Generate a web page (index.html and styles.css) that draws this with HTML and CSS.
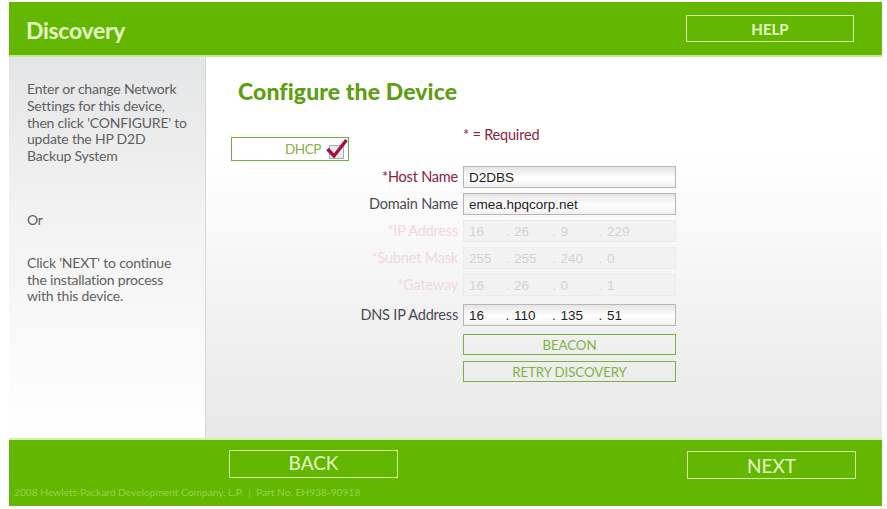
FILE: index.html
```html
<!DOCTYPE html>
<html lang="en">
<head>
<meta charset="utf-8">
<title>Discovery</title>
<link rel="stylesheet" href="styles.css">
</head>
<body>
<div class="app">
  <header class="top">
    <h1 class="brand">Discovery</h1>
    <a class="nav-btn help">HELP</a>
  </header>
  <div class="middle">
    <aside class="side">
      <p class="side-a">Enter or change Network<br>Settings for this device,<br>then click 'CONFIGURE' to<br>update the HP D2D<br>Backup System</p>
      <p class="side-b">Or</p>
      <p class="side-c">Click 'NEXT' to continue<br>the installation process<br>with this device.</p>
    </aside>
    <main class="main">
      <h2 class="title">Configure the Device</h2>
      <div class="dhcp-row">
        <div class="dhcp">
          <span>DHCP</span>
          <svg class="check" width="22" height="22" viewBox="0 0 22 22" aria-hidden="true">
            <rect x="3.5" y="7.5" width="14" height="13" fill="#e9ebee" stroke="#a9adb3" stroke-width="1"/>
            <path d="M1.5 11 L8 18 L20.5 2" fill="none" stroke="#a6123c" stroke-width="3.4"/>
          </svg>
        </div>
        <p class="required">* = Required</p>
      </div>
      <div class="form">
        <label class="lab req">*Host Name</label><div class="field">D2DBS</div>
        <label class="lab">Domain Name</label><div class="field">emea.hpqcorp.net</div>
        <label class="lab req off">*IP Address</label><div class="field ip off"><span>16</span><span>. 26</span><span>. 9</span><span>. 229</span></div>
        <label class="lab req off">*Subnet Mask</label><div class="field ip off"><span>255</span><span>. 255</span><span>. 240</span><span>. 0</span></div>
        <label class="lab req off">*Gateway</label><div class="field ip off"><span>16</span><span>. 26</span><span>. 0</span><span>. 1</span></div>
        <label class="lab dns">DNS IP Address</label><div class="field ip dns"><span>16</span><span>. 110</span><span>. 135</span><span>. 51</span></div>
        <a class="act">BEACON</a>
        <a class="act">RETRY DISCOVERY</a>
      </div>
    </main>
  </div>
  <footer class="bottom">
    <div class="bottom-btns">
      <a class="nav-btn big back">BACK</a>
      <a class="nav-btn big">NEXT</a>
    </div>
    <p class="legal">2008 Hewlett-Packard Development Company, L.P.&nbsp; |&nbsp; Part No. EH938-90918</p>
  </footer>
</div>
</body>
</html>
```

FILE: styles.css
```css
* { box-sizing: border-box; }
html, body { margin: 0; padding: 0; background: #fff; }
body { font-family: "Lato", "Open Sans", sans-serif; }
p, h1, h2 { margin: 0; }

.app { width: 873px; height: 504px; margin: 2px 0 0 9px; display: flex; flex-direction: column; }

.top { height: 55px; flex: none; background: #63b700; border-bottom: 2px solid #c4e79a; display: flex; align-items: flex-start; justify-content: space-between; padding: 13px 28px 0 17px; }
.brand { font-size: 23px; line-height: 30px; font-weight: 700; color: #e6f9c8; letter-spacing: -0.3px; }

.nav-btn { display: flex; align-items: center; justify-content: center; border: 1px solid #d4f2a6; color: #e6f9c8; }
.help { width: 168px; height: 27px; font-size: 15px; font-weight: 700; }
.big { width: 169px; height: 28px; font-size: 19px; }
.back { margin-top: -1px; padding-bottom: 3px; }

.middle { flex: 1; display: flex; min-height: 0; }
.side { width: 197px; flex: none; background: linear-gradient(#e4e5e6 0, #f2f2f2 40%, #ffffff 100%); border-right: 1px solid #d9d9d9; padding: 24px 0 0 18px; color: #5f5f5f; font-size: 14px; line-height: 16.8px; letter-spacing: -0.2px; white-space: nowrap; }
.side-b { margin-top: 47px; }
.side-c { margin-top: 26px; }

.main { flex: 1; background: linear-gradient(#ffffff 0, #ffffff 25%, #e8e8e8 100%); padding: 21px 0 0 25px; }
.title { font-size: 23px; line-height: 26px; font-weight: 900; color: #5f9d12; padding-left: 7px; letter-spacing: 0.1px; }

.dhcp-row { display: flex; margin-top: 33px; height: 30px; }
.dhcp { width: 118px; height: 24px; border: 1px solid #7ba84a; background: #fff; display: flex; align-items: center; justify-content: flex-end; gap: 5px; padding-right: 0; color: #7eb43c; font-size: 13.5px; letter-spacing: -0.4px; }
.check { flex: none; }
.required { margin: -12px 0 0 114px; color: #8a2340; font-size: 14.5px; line-height: 20px; letter-spacing: -0.2px; }

.form { display: grid; grid-template-columns: 227px 213px; column-gap: 5px; row-gap: 5px; grid-auto-rows: 22px; margin-top: -1px; align-items: start; }
.lab { text-align: right; font-size: 14.5px; line-height: 21px; color: #4a4a52; letter-spacing: -0.2px; white-space: nowrap; }
.lab.req { color: #8a2340; }
.lab.off { color: #f0d8de; }
.lab.dns { margin-top: 3px; }
.field { height: 22px; border: 1px solid #b9b6b6; background: linear-gradient(#e6e3e3, #ffffff 55%, #f1eeee); padding-left: 5px; font-family: "Liberation Sans", Arial, sans-serif; font-size: 13.5px; line-height: 22px; color: #1d1d1d; white-space: nowrap; }
.ip { display: flex; word-spacing: 1px; }
.ip span { width: 46.5px; flex: none; }
.ip span:first-child { width: 36.5px; }
.field.off { background: #f2f2f2; border-color: #ebebeb; color: #d2d2d2; }
.field.dns { margin-top: 3px; }

.act { grid-column: 2; height: 21px; margin-top: 6px; border: 1px solid #7ab045; color: #7eb43c; display: flex; align-items: center; justify-content: center; font-size: 13.3px; letter-spacing: -0.1px; }

.bottom { height: 68px; flex: none; background: #63b700; border-top: 2px solid #d6eeb0; padding: 11px 0 0 5px; }
.bottom-btns { display: flex; padding-left: 215px; gap: 289px; }
.legal { margin-top: 7px; font-size: 10.3px; line-height: 12px; color: #93d34a; letter-spacing: -0.05px; white-space: nowrap; }
```
